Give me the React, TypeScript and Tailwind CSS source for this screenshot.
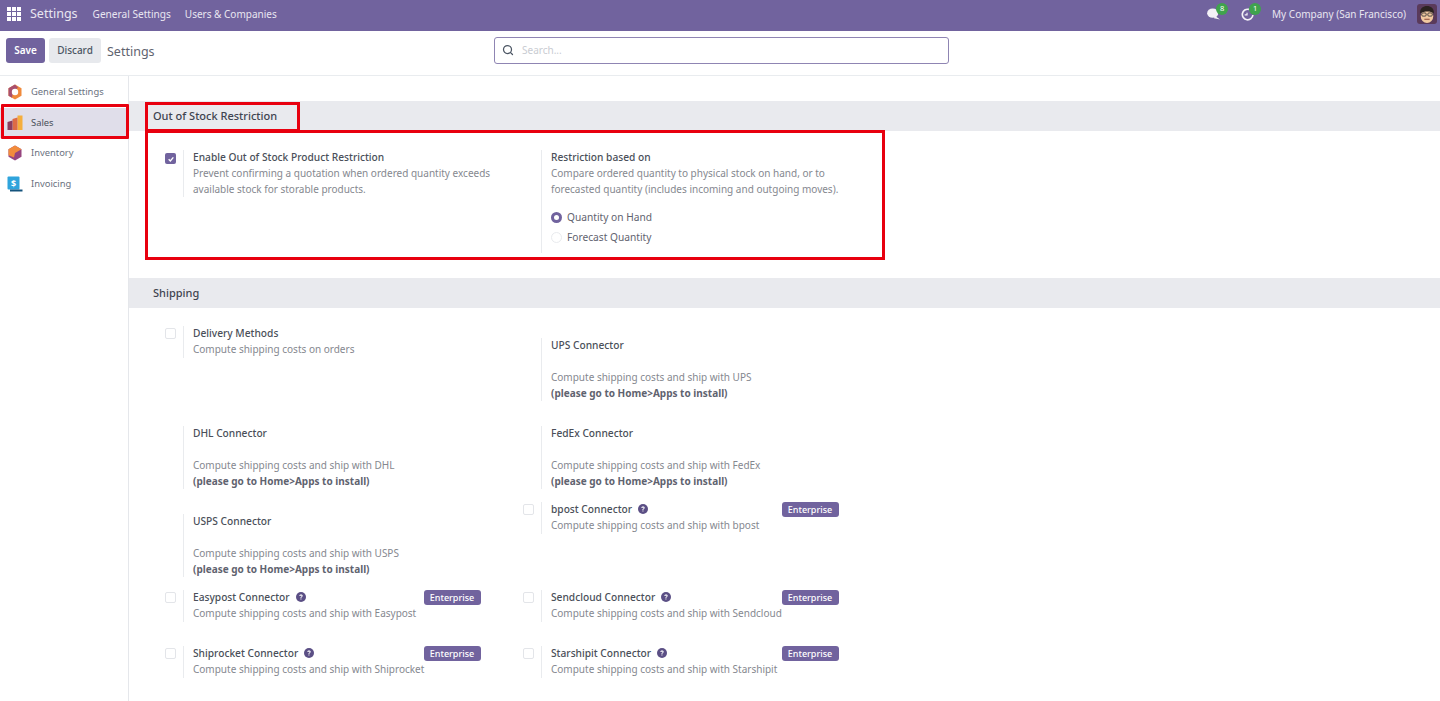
import { Search } from "lucide-react";
import { ReactNode } from "react";

const FONT = "font-['Noto_Sans',sans-serif]";

function Tick({ checked }: { checked?: boolean }) {
  if (checked) {
    return (
      <span className="flex h-[11px] w-[11px] items-center justify-center rounded-[2px] bg-[#71639e]">
        <svg viewBox="0 0 12 12" className="h-[8px] w-[8px]" fill="none" stroke="#fff" strokeWidth="2">
          <path d="M2.5 6.5l2.5 2.5 4.5-5.5" />
        </svg>
      </span>
    );
  }
  return <span className="block h-[11px] w-[11px] rounded-[2px] border border-[#e3e5e9] bg-white" />;
}

function Help() {
  return (
    <svg viewBox="0 0 16 16" className="h-[10px] w-[10px]">
      <circle cx="8" cy="8" r="8" fill="#5b4f85" />
      <path d="M5.4 6.2c0-1.5 1.1-2.3 2.6-2.3s2.7.8 2.7 2.2c0 1.9-2.1 1.8-2.1 3.3H7.1c0-2.2 1.9-2.2 1.9-3.2 0-.5-.4-.8-1-.8s-1 .3-1.1.8z" fill="#fff" />
      <rect x="7.1" y="10.3" width="1.6" height="1.7" fill="#fff" />
    </svg>
  );
}

function Gutter({ tick, checked }: { tick?: boolean; checked?: boolean }) {
  return (
    <div className={`flex w-[30px] shrink-0 justify-end pr-[7px] ${checked ? "pt-[3px]" : "pt-[2px]"}`}>
      {tick && <Tick checked={checked} />}
    </div>
  );
}

function Setting({ title, desc, help, ent }: { title: string; desc: string; help?: boolean; ent?: boolean }) {
  return (
    <div className="relative flex w-[327.5px]">
      <Gutter tick />
      <div className="h-[32px] border-l border-[#e9ebee] pl-[9px]">
        <div className="-mt-px flex h-[16px] items-center gap-[6px] text-[10.2px] font-medium text-[#4a4f59]">
          <span>{title}</span>
          {help && <Help />}
        </div>
        <div className="h-[16px] text-[#85888f]">{desc}</div>
      </div>
      {ent && (
        <span className="absolute right-0 top-0 flex h-[15px] w-[57px] items-center justify-center rounded-[3px] bg-[#71639e] text-[9px] font-medium text-white">
          Enterprise
        </span>
      )}
    </div>
  );
}

function Connector({ title, desc }: { title: string; desc: string }) {
  return (
    <div className="flex pt-[12px]">
      <Gutter />
      <div className="h-[63px] border-l border-[#e9ebee] pl-[9px]">
        <div className="-mt-px h-[16px] text-[10.2px] font-medium text-[#4a4f59]">{title}</div>
        <div className="mt-[16px] h-[16px] text-[#85888f]">{desc}</div>
        <div className="h-[16px] font-bold text-[#5f636f]">(please go to Home&gt;Apps to install)</div>
      </div>
    </div>
  );
}

function SectionHead({ children }: { children: ReactNode }) {
  return (
    <div className="flex h-[30px] items-center bg-[#e9eaee] pb-px pl-[24px] text-[11px] font-medium text-[#3f4450]">{children}</div>
  );
}

function NavIcon({ name }: { name: string }) {
  if (name === "General Settings") {
    return (
      <svg viewBox="0 0 16 16" className="h-[16px] w-[16px]">
        <path d="M8 .5l6.5 3.7v7.6L8 15.5l-6.5-3.7V4.2z" fill="#f08a3c" />
        <path d="M8 .5L1.5 4.2v7.6l3.5 2L6 8l5-4.5z" fill="#a9506f" />
        <circle cx="8" cy="8" r="3.2" fill="#fff" />
      </svg>
    );
  }
  if (name === "Sales") {
    return (
      <svg viewBox="0 0 16 16" className="h-[16px] w-[16px]">
        <path d="M10.500.5h5V15h-5z" fill="#f5ae3d" />
        <path d="M5.500 4l5-1.500V15h-5z" fill="#dd6b45" />
        <path d="M.5 7l5-1.500V15h-5z" fill="#8a3d5f" />
      </svg>
    );
  }
  if (name === "Inventory") {
    return (
      <svg viewBox="0 0 16 16" className="h-[16px] w-[16px]">
        <path d="M8 .5l6.500 3.700v7.600L8 15.500l-6.500-3.700V4.200z" fill="#96457f" />
        <path d="M8 .5L1.500 4.200v6L7 12.500 8 8l6.500-3.800z" fill="#f28c3c" />
      </svg>
    );
  }
  return (
    <svg viewBox="0 0 16 16" className="h-[16px] w-[16px]">
      <rect x=".5" y=".5" width="12" height="13" rx="1" fill="#2fa4dc" />
      <path d="M3 13.500h12.500V15.500H3z" fill="#14537c" />
      <text x="6.500" y="10.500" fontSize="9" fontWeight="700" fill="#fff" textAnchor="middle" fontFamily="Noto Sans, sans-serif">$</text>
    </svg>
  );
}

const NAV = ["General Settings", "Sales", "Inventory", "Invoicing"];

export default function App() {
  return (
    <div className={`${FONT} relative h-[701px] w-[1440px] overflow-hidden bg-white text-[10px] leading-[16px]`}>
      {/* Top bar */}
      <header className="flex h-[31px] items-center bg-[#71639e] pb-[3px] pl-[7px] pr-[3px] text-white">
        <svg viewBox="0 0 14 14" className="h-[14px] w-[14px]" fill="#fff">
          <rect x="0" y="0" width="4" height="4" /><rect x="5" y="0" width="4" height="4" /><rect x="10" y="0" width="4" height="4" />
          <rect x="0" y="5" width="4" height="4" /><rect x="5" y="5" width="4" height="4" /><rect x="10" y="5" width="4" height="4" />
          <rect x="0" y="10" width="4" height="4" /><rect x="5" y="10" width="4" height="4" /><rect x="10" y="10" width="4" height="4" />
        </svg>
        <span className="ml-[9px] text-[12.5px] text-[#e9e6f1]">Settings</span>
        <span className="ml-[15px] text-[10.1px] text-[#e9e6f1]">General Settings</span>
        <span className="ml-[14px] text-[10px] text-[#e9e6f1]">Users &amp; Companies</span>
        <div className="ml-auto flex items-center">
          <span className="relative h-[12px] w-[14px]">
            <svg viewBox="0 0 16 14" className="h-[12px] w-[14px]" fill="#f3f1f7">
              <ellipse cx="6.500" cy="6" rx="6.500" ry="5.500" />
              <path d="M9 9l6 4.500-7-1.500z" />
            </svg>
            <span className="absolute left-[9px] top-[-5px] flex h-[12px] w-[12px] items-center justify-center rounded-full bg-[#3fa34d] text-[7.5px] leading-none">8</span>
          </span>
          <span className="relative ml-[20px] h-[13px] w-[13px]">
            <svg viewBox="0 0 14 14" className="h-[13px] w-[13px]" fill="none" stroke="#f3f1f7" strokeWidth="1.8">
              <path d="M8.500 1.500a5.700 5.700 0 1 0 4.300 6" />
              <path d="M6.500 5v2.500H4" strokeWidth="1.300" />
            </svg>
            <span className="absolute left-[8px] top-[-5px] flex h-[12px] w-[12px] items-center justify-center rounded-full bg-[#3fa34d] text-[7.5px] leading-none">1</span>
          </span>
          <span className="ml-[18px] text-[10px] text-[#e9e6f1]">My Company (San Francisco)</span>
          <span className="ml-[11px] flex h-[20px] w-[20px] items-center justify-center overflow-hidden rounded-[3px] bg-[#5a3a5a]">
            <svg viewBox="0 0 19 19" className="h-[20px] w-[20px]">
              <ellipse cx="9.500" cy="11.500" rx="6" ry="6.500" fill="#f2c9a0" />
              <path d="M3 9c-.5-5 3-7 6.500-7S16.500 4 16 9c-3-2.500-9-2.500-13 0z" fill="#2b2320" />
              <rect x="4.500" y="8.500" width="4.200" height="3" rx="1" fill="none" stroke="#333" strokeWidth=".8" />
              <rect x="10.300" y="8.500" width="4.200" height="3" rx="1" fill="none" stroke="#333" strokeWidth=".8" />
              <path d="M7 14.500h5" stroke="#8a4a3a" strokeWidth="1" />
            </svg>
          </span>
        </div>
      </header>

      {/* Control panel */}
      <div className="relative flex h-[45px] items-start border-b border-[#e9ecef] pl-[6px] pt-[7px]">
        <button className="flex h-[25px] w-[39px] items-center justify-center rounded-[3px] bg-[#71639e] pb-px font-semibold text-white">Save</button>
        <button className="ml-[4px] flex h-[25px] w-[52px] items-center justify-center rounded-[3px] bg-[#e7e9ed] pb-px font-medium text-[#4b5563]">Discard</button>
        <span className="ml-[6px] mt-[6px] text-[12.5px] text-[#5f636f]">Settings</span>
        <div className="absolute left-[494px] top-[6px] flex h-[27px] w-[455px] items-center rounded-[3px] border border-[#8f85b3] pb-px pl-[7px]">
          <Search size={12} strokeWidth={2.5} className="text-[#4b5563]" />
          <span className="ml-[8px] text-[#c9ccd2]">Search...</span>
        </div>
      </div>

      <div className="flex h-[625px]">
        {/* Sidebar */}
        <aside className="w-[129px] shrink-0 border-r border-[#e5e7eb] pt-px">
          {NAV.map((n) => (
            <div key={n} className={`flex h-[30.5px] items-center gap-[8px] pl-[7px] ${n === "Sales" ? "bg-[#e0deea] text-[#4a4f59]" : "text-[#6b7280]"}`}>
              <NavIcon name={n} />
              <span className="text-[9.4px]">{n}</span>
            </div>
          ))}
        </aside>

        {/* Main */}
        <main className="min-w-0 flex-1 pt-[25px]">
          <SectionHead>Out of Stock Restriction</SectionHead>
          <div className="grid h-[147px] w-[716px] grid-cols-[358px_358px] pt-[19px]">
            <div className="flex pl-[24px]">
              <Gutter tick checked />
              <div className="h-[47px] border-l border-[#e9ebee] pl-[9px]">
                <div className="-mt-px text-[10.2px] font-medium text-[#4a4f59]">Enable Out of Stock Product Restriction</div>
                <div className="w-[310px] text-[#85888f]">Prevent confirming a quotation when ordered quantity exceeds available stock for storable products.</div>
              </div>
            </div>
            <div className="flex pl-[24px]">
              <Gutter />
              <div className="h-[103px] border-l border-[#e9ebee] pl-[9px]">
                <div className="-mt-px text-[10.2px] font-medium text-[#4a4f59]">Restriction based on</div>
                <div className="w-[304px] text-[#85888f]">Compare ordered quantity to physical stock on hand, or to forecasted quantity (includes incoming and outgoing moves).</div>
                <div className="mt-[10px] flex h-[20px] items-center text-[10.2px] text-[#5f636f]">
                  <span className="flex h-[11px] w-[11px] items-center justify-center rounded-full bg-[#71639e]"><span className="h-[5px] w-[5px] rounded-full bg-white" /></span>
                  <span className="ml-[5px]">Quantity on Hand</span>
                </div>
                <div className="flex h-[20px] items-center text-[10.2px] text-[#5f636f]">
                  <span className="h-[11px] w-[11px] rounded-full border border-[#e9ebee]" />
                  <span className="ml-[5px]">Forecast Quantity</span>
                </div>
              </div>
            </div>
          </div>
          <SectionHead>Shipping</SectionHead>
          <div className="mt-[18px] grid w-[716px] grid-cols-[358px_358px] grid-rows-[88px_88px_88px_56px_56px] [&>div]:pl-[24px]">
            <div><Setting title="Delivery Methods" desc="Compute shipping costs on orders" /></div>
            <div><Connector title="UPS Connector" desc="Compute shipping costs and ship with UPS" /></div>
            <div><Connector title="DHL Connector" desc="Compute shipping costs and ship with DHL" /></div>
            <div><Connector title="FedEx Connector" desc="Compute shipping costs and ship with FedEx" /></div>
            <div><Connector title="USPS Connector" desc="Compute shipping costs and ship with USPS" /></div>
            <div><Setting title="bpost Connector" desc="Compute shipping costs and ship with bpost" help ent /></div>
            <div><Setting title="Easypost Connector" desc="Compute shipping costs and ship with Easypost" help ent /></div>
            <div><Setting title="Sendcloud Connector" desc="Compute shipping costs and ship with Sendcloud" help ent /></div>
            <div><Setting title="Shiprocket Connector" desc="Compute shipping costs and ship with Shiprocket" help ent /></div>
            <div><Setting title="Starshipit Connector" desc="Compute shipping costs and ship with Starshipit" help ent /></div>
          </div>
        </main>
      </div>

      {/* Red annotation boxes drawn over the screenshot */}
      <div className="absolute left-[1px] top-[104px] h-[35px] w-[128px] rounded-[1px] border-[3px] border-[#e8000f]" />
      <div className="absolute left-[145px] top-[102px] h-[30px] w-[155px] border-[3px] border-[#e8000f]" />
      <div className="absolute left-[145px] top-[130px] h-[130px] w-[740px] border-[3px] border-[#e8000f]" />
    </div>
  );
}
